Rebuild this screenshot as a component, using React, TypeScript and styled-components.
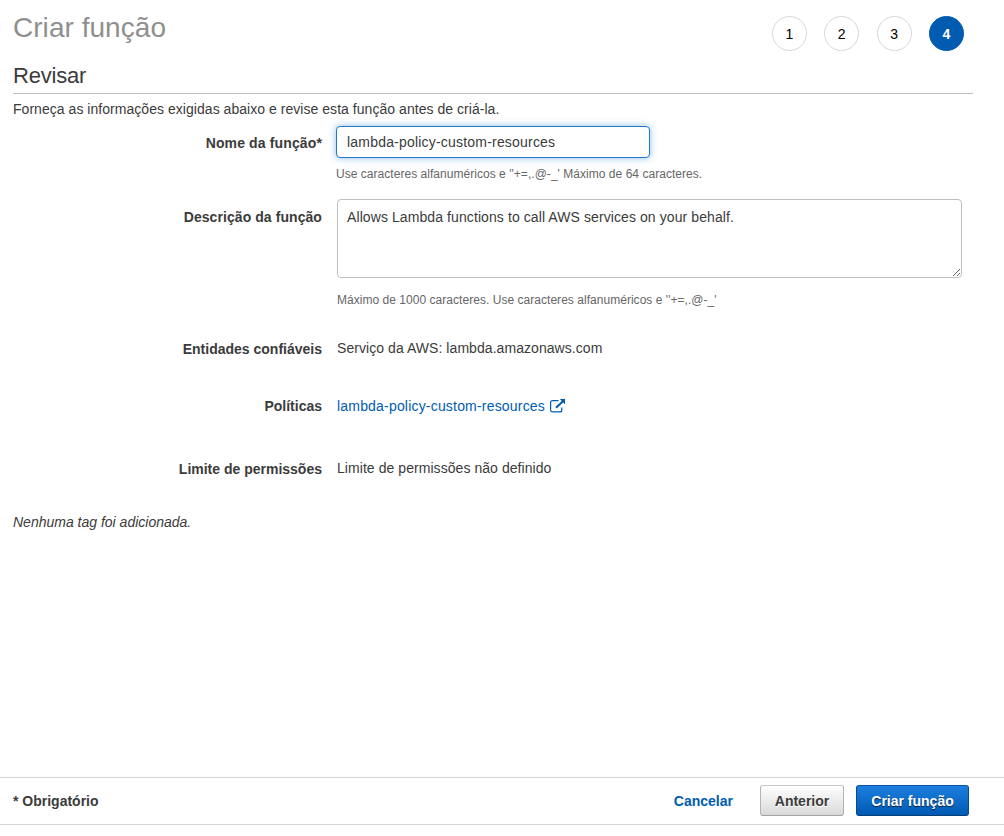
import React from "react";
import styled, { createGlobalStyle } from "styled-components";

const GlobalStyle = createGlobalStyle`
  * { box-sizing: border-box; }
  body {
    margin: 0;
    background: #fff;
    color: #3b3b3b;
    font: 14px/20px "Liberation Sans", Arial, sans-serif;
  }
`;

const Page = styled.div`
  display: flex;
  flex-direction: column;
  height: 836px;
  overflow: hidden;
`;

const Main = styled.main`
  flex: 1;
  padding: 0 31px 0 13px;
`;

const Header = styled.header`
  display: flex;
  justify-content: space-between;
  height: 60px;
  padding-right: 9px;
`;

const Title = styled.h1`
  margin: 10px 0 0;
  font-size: 28px;
  line-height: 36px;
  letter-spacing: 0.04px;
  font-weight: 400;
  color: #8f8f8f;
`;

const Steps = styled.ol`
  display: flex;
  gap: 17.4px;
  margin: 16px 0 0;
  padding: 0;
  list-style: none;
`;

const Step = styled.li<{ $active?: boolean }>`
  display: flex;
  align-items: center;
  justify-content: center;
  width: 35px;
  height: 35px;
  padding-top: 1px;
  border: 1px solid ${(p) => (p.$active ? "#005bb1" : "#d8d8d8")};
  border-radius: 50%;
  background: ${(p) => (p.$active ? "#005bb1" : "#fff")};
  color: ${(p) => (p.$active ? "#fff" : "#000")};
  font-weight: ${(p) => (p.$active ? 700 : 400)};
`;

const SectionTitle = styled.h2`
  height: 34px;
  margin: 0 0 5px;
  padding-top: 1px;
  border-bottom: 1px solid #bfbfbf;
  font-size: 22px;
  line-height: 30px;
  letter-spacing: -0.2px;
  font-weight: 400;
`;

const Intro = styled.p`
  margin: 0 0 7px;
  letter-spacing: 0.04px;
`;

const Row = styled.div<{ $height: number }>`
  display: grid;
  grid-template-columns: 309px 1fr;
  column-gap: 14px;
  align-items: start;
  height: ${(p) => p.$height}px;
`;

const Label = styled.label<{ $top?: number; $tracking?: number }>`
  padding-top: ${(p) => p.$top ?? 1}px;
  font-weight: 700;
  letter-spacing: ${(p) => p.$tracking ?? 0}px;
  text-align: right;
`;

const Value = styled.div`
  padding-left: 1px;
  letter-spacing: 0.06px;
`;

const NameInput = styled.input`
  display: block;
  width: 314px;
  height: 32px;
  padding: 0 10px 1px;
  border: 1px solid #1f7bd2;
  border-radius: 4px;
  outline: none;
  box-shadow: 0 0 7px rgba(31, 123, 210, 0.5);
  color: inherit;
  font: inherit;
  letter-spacing: 0.2px;
`;

const Description = styled.textarea`
  display: block;
  width: 625px;
  height: 79px;
  padding: 7px 9px;
  border: 1px solid #bfbfbf;
  border-radius: 4px;
  outline: none;
  color: inherit;
  font: inherit;
  letter-spacing: 0.09px;
  resize: both;
`;

const Hint = styled.p<{ $gap: number }>`
  margin: ${(p) => p.$gap}px 0 0;
  color: #666;
  font-size: 12px;
  line-height: 18px;
  letter-spacing: 0.035px;
`;

const PolicyLink = styled.a`
  display: inline-flex;
  gap: 5px;
  color: #005bb1;
  letter-spacing: 0.19px;
  text-decoration: none;
`;

const LinkIcon = styled.svg`
  width: 16px;
  height: 14px;
  margin-top: 3px;
`;

const EmptyTags = styled.p`
  margin: 0;
  font-style: italic;
`;

const Footer = styled.footer`
  display: flex;
  align-items: center;
  justify-content: space-between;
  height: 48px;
  margin-bottom: 11px;
  padding: 0 35px 1px 13px;
  border-top: 1px solid #d5d5d5;
  border-bottom: 1px solid #d5d5d5;
  font-weight: 700;
`;

const Actions = styled.div`
  display: flex;
  align-items: center;
`;

const CancelLink = styled.a`
  margin-right: 27px;
  color: #005bb1;
  text-decoration: none;
`;

const Button = styled.button<{ $primary?: boolean }>`
  width: ${(p) => (p.$primary ? 113 : 84)}px;
  height: 31px;
  margin-left: ${(p) => (p.$primary ? 12 : 0)}px;
  padding: 0;
  border: 1px solid;
  border-color: ${(p) => (p.$primary ? "#0a56a5 #084a8e #073c74" : "#c9c9c9 #b5b5b5 #a3a3a3")};
  border-radius: 3px;
  background: ${(p) =>
    p.$primary
      ? "linear-gradient(#1c7fdf, #0059b3)"
      : "linear-gradient(#ffffff, #d9d9d9)"};
  color: ${(p) => (p.$primary ? "#fff" : "#3b3b3b")};
  text-shadow: ${(p) => (p.$primary ? "0 1px 1px rgba(0, 0, 0, 0.7)" : "0 1px 0 #fff")};
  font: inherit;
`;

const ExternalIcon = () => (
  <LinkIcon viewBox="0 0 16 14" fill="none" stroke="#005bb1">
    <path d="M8.5 1.6H2.6A2 2 0 0 0 .6 3.6V10.9A2 2 0 0 0 2.6 12.9H9.8A2 2 0 0 0 11.8 10.9V8.5" strokeWidth="1.2" />
    <path d="M6 8.8L13 2.2" strokeWidth="2" />
    <path d="M9.8 0H15V5.2Z" fill="#005bb1" stroke="none" />
  </LinkIcon>
);

export default function App() {
  return (
    <Page>
      <GlobalStyle />
      <Main>
        <Header>
          <Title>Criar função</Title>
          <Steps>
            <Step>1</Step>
            <Step>2</Step>
            <Step>3</Step>
            <Step $active>4</Step>
          </Steps>
        </Header>
        <SectionTitle>Revisar</SectionTitle>
        <Intro>Forneça as informações exigidas abaixo e revise esta função antes de criá-la.</Intro>
        <Row $height={73}>
          <Label $top={7} $tracking={0.13} htmlFor="name">Nome da função*</Label>
          <div>
            <NameInput id="name" defaultValue="lambda-policy-custom-resources" />
            <Hint $gap={7}>Use caracteres alfanuméricos e ''+=,.@-_' Máximo de 64 caracteres.</Hint>
          </div>
        </Row>
        <Row $height={139}>
          <Label $top={8} $tracking={0.07} htmlFor="description">Descrição da função</Label>
          <Value>
            <Description
              id="description"
              defaultValue="Allows Lambda functions to call AWS services on your behalf."
            />
            <Hint $gap={13}>Máximo de 1000 caracteres. Use caracteres alfanuméricos e ''+=,.@-_'</Hint>
          </Value>
        </Row>
        <Row $height={58}>
          <Label as="div">Entidades confiáveis</Label>
          <Value>Serviço da AWS: lambda.amazonaws.com</Value>
        </Row>
        <Row $height={62}>
          <Label as="div" $top={0}>Políticas</Label>
          <Value>
            <PolicyLink href="#">
              lambda-policy-custom-resources
              <ExternalIcon />
            </PolicyLink>
          </Value>
        </Row>
        <Row $height={54}>
          <Label as="div">Limite de permissões</Label>
          <Value>Limite de permissões não definido</Value>
        </Row>
        <EmptyTags>Nenhuma tag foi adicionada.</EmptyTags>
      </Main>
      <Footer>
        <span>* Obrigatório</span>
        <Actions>
          <CancelLink href="#">Cancelar</CancelLink>
          <Button>Anterior</Button>
          <Button $primary>Criar função</Button>
        </Actions>
      </Footer>
    </Page>
  );
}
